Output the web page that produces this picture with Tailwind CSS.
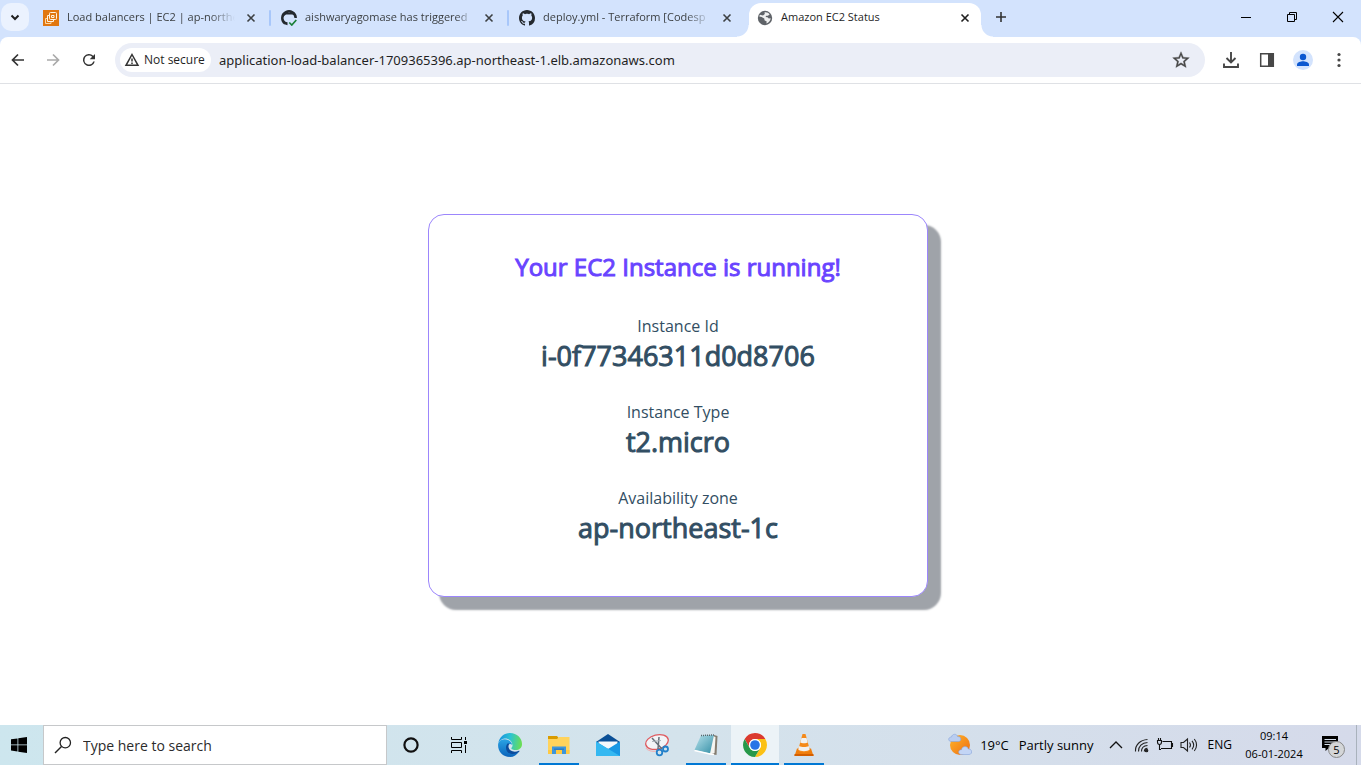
<!DOCTYPE html>
<html lang="en">
<head>
<meta charset="utf-8">
<title>Amazon EC2 Status</title>
<script src="https://cdn.jsdelivr.net/npm/@tailwindcss/browser@4"></script>
</head>
<body class="flex min-h-screen flex-col bg-white font-['Open_Sans',sans-serif] text-[#1f1f1f]">
<svg class="hidden">
  <symbol id="close" viewBox="0 0 16 16"><path d="M4.500 4.500l7 7M11.500 4.500l-7 7" fill="none" stroke="currentColor" stroke-width="1.600"/></symbol>
  <symbol id="octocat" viewBox="0 0 16 16"><path fill="currentColor" d="M8 0C3.58 0 0 3.58 0 8c0 3.54 2.29 6.53 5.47 7.59.4.07.55-.17.55-.38 0-.19-.01-.82-.01-1.49-2.01.37-2.53-.49-2.69-.94-.09-.23-.48-.94-.82-1.13-.28-.15-.68-.52-.01-.53.63-.01 1.08.58 1.23.82.72 1.21 1.87.87 2.33.66.07-.52.28-.87.51-1.07-1.78-.2-3.64-.89-3.64-3.95 0-.87.31-1.59.82-2.15-.08-.2-.36-1.02.08-2.12 0 0 .67-.21 2.2.82.64-.18 1.32-.27 2-.27.68 0 1.36.09 2 .27 1.53-1.04 2.2-.82 2.2-.82.44 1.1.16 1.92.08 2.12.51.56.82 1.27.82 2.15 0 3.07-1.87 3.75-3.65 3.95.29.25.54.73.54 1.48 0 1.07-.01 1.93-.01 2.2 0 .21.15.46.55.38A8.013 8.013 0 0016 8c0-4.42-3.58-8-8-8z"/></symbol>
</svg>

<header class="bg-[#d3e3fd]">
  <div class="flex h-[37px] items-stretch text-[11px] text-[#3c4043]">
    <button aria-label="Search tabs" class="ml-px mt-[3px] grid size-7 shrink-0 place-items-center rounded-[10px] bg-[#ebf2fe]">
      <svg class="size-4" viewBox="0 0 16 16"><path d="M4.500 6.500L8 10l3.500-3.500" fill="none" stroke="#1f1f1f" stroke-width="2"/></svg>
    </button>
    <div class="ml-1.5 flex w-[238px] items-center pb-0.5 pl-2">
      <svg class="size-4 shrink-0" viewBox="0 0 16 16"><path fill="#e1770f" d="M0 0h16v16H0z"/><g fill="none" stroke="#fff3df" stroke-width="1"><rect x="6.500" y="2.500" width="7" height="7" rx="1"/><path d="M8.500 5.500h2.500v2H8.500zM6 5.500H4.500v6h6V10"/><path d="M4 8.500H2.500v5H8V12" stroke="#ffd7a0"/></g></svg>
      <button class="ml-2 min-w-0 flex-1 whitespace-nowrap text-left mask-r-from-85%">Load balancers | EC2 | ap-northe</button>
      <button aria-label="Close tab" class="ml-2 size-4 shrink-0"><svg class="size-4"><use href="#close"/></svg></button>
      <span class="ml-2.5 mr-0.5 h-4 w-0.5 rounded bg-[#a8c7fa]"></span>
    </div>
    <div class="flex w-[238px] items-center pb-0.5 pl-2">
      <svg class="size-4 shrink-0" viewBox="0 0 16 16"><path d="M4 13.500A6.700 6.700 0 1 1 14.700 8" fill="none" stroke="#24292f" stroke-width="2.500"/><path d="M3 2.500l4 .5h3l3.500-.5v3L12 4.500H5L3 6zM1.500 9.500c2 0 2 3 5 2.700v3l-3-.9z" fill="#24292f"/><path d="M8.300 12.500l2.500 2.500 4.500-5" fill="none" stroke="#1a7f37" stroke-width="1.700"/></svg>
      <button class="ml-2 min-w-0 flex-1 whitespace-nowrap text-left mask-r-from-90%">aishwaryagomase has triggered</button>
      <button aria-label="Close tab" class="ml-2 size-4 shrink-0"><svg class="size-4"><use href="#close"/></svg></button>
      <span class="ml-2.5 mr-0.5 h-4 w-0.5 rounded bg-[#a8c7fa]"></span>
    </div>
    <div class="flex w-[238px] items-center pb-0.5 pl-2">
      <svg class="size-4 shrink-0 text-[#24292f]"><use href="#octocat"/></svg>
      <button class="ml-2 min-w-0 flex-1 whitespace-nowrap text-left mask-r-from-85%">deploy.yml - Terraform [Codesp</button>
      <button aria-label="Close tab" class="ml-2 mr-3.5 size-4 shrink-0"><svg class="size-4"><use href="#close"/></svg></button>
    </div>
    <div class="relative mt-[3px] flex w-[232px] items-center rounded-t-xl bg-white pb-[5px] pl-2 pr-2 text-[#1f1f1f]">
      <span class="absolute -left-3 bottom-0 size-3 bg-[radial-gradient(circle_at_0_0,#d3e3fd_11px,white_12px)]"></span>
      <span class="absolute -right-3 bottom-0 size-3 bg-[radial-gradient(circle_at_100%_0,#d3e3fd_11px,white_12px)]"></span>
      <svg class="size-4 shrink-0" viewBox="0 0 16 16"><circle cx="8" cy="8" r="7.200" fill="#5f6368"/><path fill="#fff" d="M7.500 2.300c2-.5 4 .4 5.200 1.900L11 5.800H9.300L8.500 7l2 .3 1.300 1.300 1.900-.3c-.2 2.400-2 4.700-4.300 5.300l.3-2-2.200-1.300-.2-1.700-2.600-1.600-2.400-.4c.1-.6.300-1.300.6-1.900L6 5.500l1.800-1.400z" opacity=".9"/></svg>
      <button class="ml-2 min-w-0 flex-1 whitespace-nowrap text-left">Amazon EC2 Status</button>
      <button aria-label="Close tab" class="size-4 shrink-0"><svg class="size-4"><use href="#close"/></svg></button>
    </div>
    <button aria-label="New tab" class="ml-1.5 grid w-7 place-items-center pb-[3px]"><svg class="size-4" viewBox="0 0 16 16"><path d="M8 3v10M3 8h10" stroke="#333" stroke-width="1.600"/></svg></button>
    <div class="ml-auto flex pb-[3px] text-black">
      <button aria-label="Minimize" class="grid w-[46px] place-items-center"><svg class="size-4" viewBox="0 0 16 16"><path d="M3 8.500h10" stroke="currentColor"/></svg></button>
      <button aria-label="Restore" class="grid w-[46px] place-items-center"><svg class="size-4" viewBox="0 0 16 16"><path d="M3.500 5.500h7v7h-7zM5.500 5V3.500h7v7H11" fill="none" stroke="currentColor"/></svg></button>
      <button aria-label="Close" class="grid w-[46px] place-items-center"><svg class="size-4" viewBox="0 0 16 16"><path d="M3 3l10 10M13 3L3 13" stroke="currentColor" stroke-width="1.100"/></svg></button>
    </div>
  </div>

  <div class="flex h-[47px] items-center rounded-t-lg border-b border-[#dfe1e5] bg-white pr-1 text-[#474747]">
    <div class="flex w-[115px] shrink-0 text-[#333]">
      <button aria-label="Back" class="grid h-9 w-[35px] place-items-center"><svg class="size-4" viewBox="0 0 16 16"><path d="M14 8H2.500M8 2.500L2.500 8 8 13.500" fill="none" stroke="currentColor" stroke-width="1.700"/></svg></button>
      <button aria-label="Forward" disabled class="grid size-9 place-items-center text-[#aaa]"><svg class="size-4" viewBox="0 0 16 16"><path d="M2 8h11.500M8 2.500L13.500 8 8 13.500" fill="none" stroke="currentColor" stroke-width="1.700"/></svg></button>
      <button aria-label="Reload" class="grid size-9 place-items-center"><svg class="size-[18px]" viewBox="0 0 24 24"><path fill="currentColor" d="M17.650 6.350A8 8 0 1 0 19.730 14h-2.080A6 6 0 1 1 12 6c1.660 0 3.140.69 4.220 1.780L13 11h7V4z"/></svg></button>
    </div>
    <div class="flex h-[34px] flex-1 items-center rounded-full bg-[#ebeef7] pl-[5px] pr-3.5">
      <button class="flex h-6 w-[91px] shrink-0 items-center rounded-full bg-white pl-1 text-xs text-[#1f1f1f]">
        <svg class="mr-1 size-4" viewBox="0 0 16 16"><path d="M8 2.500L14 13.300H2z" fill="none" stroke="#333" stroke-width="1.500"/><path d="M8 6.500v3M8 10.500v1.500" stroke="#333" stroke-width="1.500"/></svg>Not secure
      </button>
      <input aria-label="Address" value="application-load-balancer-1709365396.ap-northeast-1.elb.amazonaws.com" class="ml-2 min-w-0 flex-1 bg-transparent pt-0.5 font-['Noto_Sans',sans-serif] text-[13px] text-[#1f1f1f] outline-none">
      <button aria-label="Bookmark this tab"><svg class="size-5" viewBox="0 0 24 24"><path fill="currentColor" stroke="currentColor" stroke-width=".4" d="M22 9.240l-7.190-.62L12 2 9.190 8.630 2 9.240l5.460 4.730L5.820 21 12 17.270 18.180 21l-1.630-7.030zM12 15.400l-3.760 2.270 1-4.280-3.320-2.880 4.380-.38L12 6.100l1.710 4.040 4.380.38-3.320 2.880 1 4.280z"/></svg></button>
    </div>
    <div class="ml-2 flex shrink-0">
      <button aria-label="Downloads" class="grid size-9 place-items-center"><svg class="size-[18px]" viewBox="0 0 18 18"><path d="M9 1v10M4.500 7L9 11.500 13.500 7M2 12.500V16h14v-3.500" fill="none" stroke="currentColor" stroke-width="1.900"/></svg></button>
      <button aria-label="Side panel" class="grid size-9 place-items-center"><svg class="size-4" viewBox="0 0 16 16"><path d="M1.700 1.700h12.600v12.600H1.700z" fill="none" stroke="currentColor" stroke-width="1.500"/><path d="M9 1h6v14H9z" fill="currentColor"/></svg></button>
      <button aria-label="Profile" class="grid size-9 place-items-center"><svg class="size-5" viewBox="0 0 20 20"><circle cx="10" cy="10" r="10" fill="#d3e3fd"/><circle cx="10" cy="7" r="3.200" fill="#0b57d0"/><path d="M4 16v-1.600c0-2.200 4-3.200 6-3.200s6 1 6 3.200V16z" fill="#0b57d0"/></svg></button>
      <button aria-label="Menu" class="grid size-9 place-items-center"><svg class="size-4" viewBox="0 0 16 16" fill="currentColor"><circle cx="8" cy="2.500" r="1.600"/><circle cx="8" cy="8" r="1.600"/><circle cx="8" cy="13.500" r="1.600"/></svg></button>
    </div>
  </div>
</header>

<main class="flex flex-1 items-center justify-center pr-[5px] pt-0.5">
  <section class="w-full max-w-[500px] rounded-2xl border border-[#9c86fc] bg-white px-4 pb-[50px] pt-[34px] text-center text-[#324e63] shadow-[12px_12px_2px_1px_#9fa3a9]">
    <h1 class="text-2xl leading-9 text-[#6944ff] [-webkit-text-stroke:1px]">Your EC2 Instance is running!</h1>
    <dl class="mt-[29px] flex flex-col gap-[26px]">
      <div><dt class="text-base leading-6">Instance Id</dt><dd class="text-[27px] leading-9 [-webkit-text-stroke:1px]">i-0f77346311d0d8706</dd></div>
      <div><dt class="text-base leading-6">Instance Type</dt><dd class="text-[27px] leading-9 [-webkit-text-stroke:1px]">t2.micro</dd></div>
      <div><dt class="text-base leading-6">Availability zone</dt><dd class="text-[27px] leading-9 [-webkit-text-stroke:1px]">ap-northeast-1c</dd></div>
    </dl>
  </section>
</main>

<footer class="flex h-10 items-stretch bg-linear-to-r from-[#cde6ee] via-[#d4e3ec] to-[#d5daea] text-black">
  <button aria-label="Start" class="grid w-[43px] shrink-0 place-items-center pr-[5px]"><svg class="size-4" viewBox="0 0 16 16"><path d="M0 2.300l6.500-.9v6.100H0zM7.300 1.300L16 0v7.500H7.300zM0 8.300h6.500v6.200L0 13.600zM7.300 8.300H16V16l-8.700-1.300z"/></svg></button>
  <label class="flex w-[344px] items-center border border-[#c6c8ca] bg-white pl-2.5">
    <svg class="mr-[11px] size-[18px]" viewBox="0 0 18 18"><circle cx="11.300" cy="6.700" r="5.200" fill="none" stroke="#222" stroke-width="1.300"/><path d="M7.500 10.500L1 17" stroke="#222" stroke-width="1.400"/></svg>
    <input aria-label="Search" placeholder="Type here to search" class="min-w-0 flex-1 pt-0.5 text-sm outline-none placeholder:text-[#2b2b2b]">
  </label>
  <nav class="flex">
    <button aria-label="Cortana" class="grid w-12 place-items-center"><svg class="size-4" viewBox="0 0 16 16"><circle cx="8" cy="8" r="6.600" fill="none" stroke="#111" stroke-width="2.200"/></svg></button>
    <button aria-label="Task view" class="grid w-12 place-items-center"><svg class="size-4" viewBox="0 0 16 16"><path d="M.5 0v2.500h10V0M.5 5.500h10v5H.5zM.5 16v-2.500h10V16M14.500 0v3M14.500 8v8" fill="none" stroke="#000"/><path d="M13 4h3v3h-3z"/></svg></button>
    <div class="ml-[3px] flex gap-px">
      <button aria-label="Microsoft Edge" class="grid w-12 place-items-center"><svg class="size-6" viewBox="0 0 24 24"><defs><linearGradient id="eg" x1="0" y1=".3" x2="1" y2=".4"><stop stop-color="#168fe0"/><stop offset=".5" stop-color="#2cc3d2"/><stop offset="1" stop-color="#6ade53"/></linearGradient><linearGradient id="eb" x1="0" y1="0" x2="0" y2="1"><stop stop-color="#2aa4e4"/><stop offset="1" stop-color="#0a63bb"/></linearGradient></defs><path fill="url(#eb)" d="M.2 10.500C2 6 7 5.500 10 7c3 1.300 4 3.500 4.200 5-1.500-2-5-1.200-5 2.500 0 5 6.500 7 11.800 4-2 3.500-5.200 5.500-9 5.500C4 24-.8 17.500.2 10.500z"/><path fill="#0b4b9c" d="M9.500 10.500c-3 3.500-1.500 10 4.500 10.500 3 .2 5.700-1 7.300-2.500.4-.4.300-.9-.4-.7-5 2-9.500.2-10.300-3.300-.3-1.600 0-3 1-4z"/><path fill="url(#eg)" d="M.3 10.300C1.300 4 6.200 0 12 0c7 0 12 5 12 11 0 4-3 6-6.200 6-2.500 0-4.700-1-4.500-2 .1-.5 1.400-1.100 1.200-3C14 8 10.500 5.200 6.500 5.600 3.500 6 1.300 8 .3 10.300z"/></svg></button>
      <button aria-label="File Explorer" class="grid w-12 place-items-center bg-[linear-gradient(#0078d4,#0078d4)] bg-[length:40px_2px] bg-bottom bg-no-repeat"><svg class="size-6" viewBox="0 0 24 24"><path fill="#d99b00" d="M1 3h9l2 2.500V8H1z"/><path fill="#ffd35c" d="M1 6h9l2-2h10.500v16.500H1z"/><path fill="#ffc943" d="M1 17h21.500v4H1z"/><path fill="#3d96dc" d="M5 13.500h14V21h-4v-4H9v4H5z"/><path fill="#2b7cc4" d="M7 15.500h10V17H7z"/></svg></button>
      <button aria-label="Mail" class="grid w-12 place-items-center"><svg class="size-6" viewBox="0 0 24 24"><path fill="#0a4f96" d="M0 9L12 1l12 8v3H0z"/><path fill="#f4f8fc" d="M2.500 8.500h19V15h-19z"/><path fill="#1998e4" d="M0 8.500l12 7.500 12-7.500V23H0z"/><path fill="#35b8f1" d="M0 23V8.500L24 23z"/></svg></button>
      <button aria-label="Snipping Tool" class="grid w-12 place-items-center"><svg class="size-6" viewBox="0 0 24 24"><ellipse cx="12" cy="9" rx="11.500" ry="7" transform="rotate(-14 12 9)" fill="#f2f4f7" stroke="#df5b60" stroke-width="1.300"/><path d="M1 15c2 3 7 4 11 3" fill="none" stroke="#eeb2b5" stroke-width="1.200"/><path d="M7 5l10 11M14 4l-1 12" stroke="#666f78" stroke-width="1.500"/><path d="M7 8.500l9-1" stroke="#aab3ba"/><circle cx="14.500" cy="19.500" r="2.800" fill="none" stroke="#2280ca" stroke-width="1.800"/><circle cx="20.500" cy="16" r="2.500" fill="none" stroke="#2280ca" stroke-width="1.800"/></svg></button>
      <button aria-label="Notepad" class="grid w-12 place-items-center bg-[linear-gradient(#0078d4,#0078d4)] bg-[length:40px_2px] bg-bottom bg-no-repeat"><svg class="size-6" viewBox="0 0 24 24"><defs><linearGradient id="np" x1="0" y1="0" x2="1" y2="1"><stop stop-color="#b8e2ec"/><stop offset="1" stop-color="#348fa6"/></linearGradient></defs><path fill="#857d70" d="M20 2l3.500 1-1 19-5-1z"/><path fill="#f5f5f1" d="M18.500 3l3 1-1 16-5 1.500z"/><path fill="url(#np)" d="M7 2.500L20 2l-4 18.500L.5 17z"/><path d="M7 2.500L20 2" stroke="#59666b" stroke-width="1.500" stroke-dasharray="1 1"/><path d="M.5 17.500L16 21l4 .5" fill="none" stroke="#fff" stroke-width="1.300"/></svg></button>
      <button aria-label="Google Chrome" class="grid w-12 place-items-center border-b-2 border-[#0078d4] bg-[#ecf3f7] pt-0.5"><svg class="size-6" viewBox="0 0 24 24"><circle cx="12" cy="12" r="12" fill="#fff"/><path fill="#db3a2f" d="M12 0a12 12 0 0 1 10.390 6H12a6 6 0 0 0-5.200 9L1.610 6A12 12 0 0 1 12 0z"/><path fill="#fbc116" d="M22.390 6A12 12 0 0 1 12 24l5.200-9A6 6 0 0 0 12 6z"/><path fill="#28994a" d="M1.610 6A12 12 0 0 0 12 24l5.200-9a6 6 0 0 1-10.400 0z"/><circle cx="12" cy="12" r="6" fill="#fff"/><circle cx="12" cy="12" r="4.800" fill="#2874e6"/></svg></button>
      <button aria-label="VLC media player" class="grid w-12 place-items-center bg-[linear-gradient(#0078d4,#0078d4)] bg-[length:40px_2px] bg-bottom bg-no-repeat"><svg class="size-6" viewBox="0 0 24 24"><path fill="#ef7d0c" d="M5 15.500h14l2.500 7.500h-19z"/><path fill="#d45f00" d="M2.500 21h19v2h-19z"/><path fill="#f58a1a" d="M10.500 1h3L18 17.500c-2 2.500-10 2.500-12 0z"/><path fill="#f1f1f1" d="M9.500 5h5l1.200 4.500c-1.500 1-5.900 1-7.400 0zM7.300 13c2 1.300 7.400 1.300 9.400 0l1 3.500c-2 2.200-9.400 2.200-11.400 0z"/></svg></button>
    </div>
  </nav>
  <div class="ml-auto flex items-center">
    <button class="flex items-center text-[13px]">
      <svg class="mr-2 size-6" viewBox="0 0 24 24"><defs><linearGradient id="sun" x1="0" y1="0" x2="1" y2="1"><stop stop-color="#ffb62b"/><stop offset="1" stop-color="#ed6c12"/></linearGradient></defs><circle cx="12" cy="12" r="10" fill="url(#sun)"/><path d="M3.500 8.500C-.5 8.500 0 4 3.500 4 4 .5 9 .5 9.500 3.500c4-.5 4.500 5 1 5z" fill="#b9cdf1" stroke="#86a4dc" stroke-width=".6"/><path d="M13.500 21.500c-4 0-3.500-5 0-4.800.6-4 6-4 6.800-.7 4.200-.4 4.500 5.500.7 5.500z" fill="#c3d5f5" stroke="#86a4dc" stroke-width=".6"/></svg>
      <span class="mr-2.5 pt-0.5">19°C</span><span class="pt-0.5">Partly sunny</span>
    </button>
    <button aria-label="Show hidden icons" class="ml-3.5"><svg class="size-4" viewBox="0 0 16 16"><path d="M2 11l6-6 6 6" fill="none" stroke="#111" stroke-width="1.300"/></svg></button>
    <button aria-label="Network" class="ml-2.5"><svg class="size-4" viewBox="0 0 16 16" fill="none" stroke="#222" stroke-width="1.100"><path d="M1.500 14.500C1 8 6 3 13.500 2.500M4.500 14.500c-.2-5 3.500-8.800 9-9M7.500 14.500c-.1-3.500 2-5.700 6-6M10.300 14.500c0-2 1-3 3.200-3.200"/><circle cx="12.500" cy="13.500" r="1.300" fill="#222"/></svg></button>
    <button aria-label="Battery" class="ml-1.5"><svg class="size-[18px]" viewBox="0 0 18 18" fill="none" stroke="#111" stroke-width="1.100"><path d="M6.500 5.500h9v7H5M15.500 7.500h1v3h-1M3.500 8.500v5H5M2.500 2v2.500M4.500 2v2.500M1.500 4.500h4V6c0 1.500-.7 2.500-2 2.500s-2-1-2-2.500z"/></svg></button>
    <button aria-label="Volume" class="ml-1.5"><svg class="size-[18px]" viewBox="0 0 18 18" fill="none" stroke="#222" stroke-width="1.100"><path d="M1 6.500h2.500L7.500 3v12l-4-3.500H1zM9.500 6.500c1.200 1.500 1.200 3.500 0 5M12 4.800c2 2.500 2 6 0 8.500M14.300 3c3 3.600 3 8.500 0 12"/></svg></button>
    <button class="ml-2.5 text-xs">ENG</button>
    <button class="ml-3 w-[60px] whitespace-nowrap text-center text-[11px] leading-[18px]"><span class="block">09:14</span><span class="block">06-01-2024</span></button>
    <button aria-label="Notifications, 5 new" class="relative ml-4 mr-3 size-6">
      <svg class="size-6" viewBox="0 0 24 24"><path d="M2 3h16v12H9l-3.500 3v-3H2z"/><path d="M4.500 6.500H16M4.500 9H16M4.500 11.500H11" stroke="#d5deeb"/></svg>
      <span class="absolute left-2 top-2 grid size-[17px] place-items-center rounded-full border border-[#888] bg-[#d4d6d8] text-[11px] leading-none">5</span>
    </button>
    <button aria-label="Show desktop" class="h-10 w-[5px] border-l border-[#a9b2bc]"></button>
  </div>
</footer>
</body>
</html>
